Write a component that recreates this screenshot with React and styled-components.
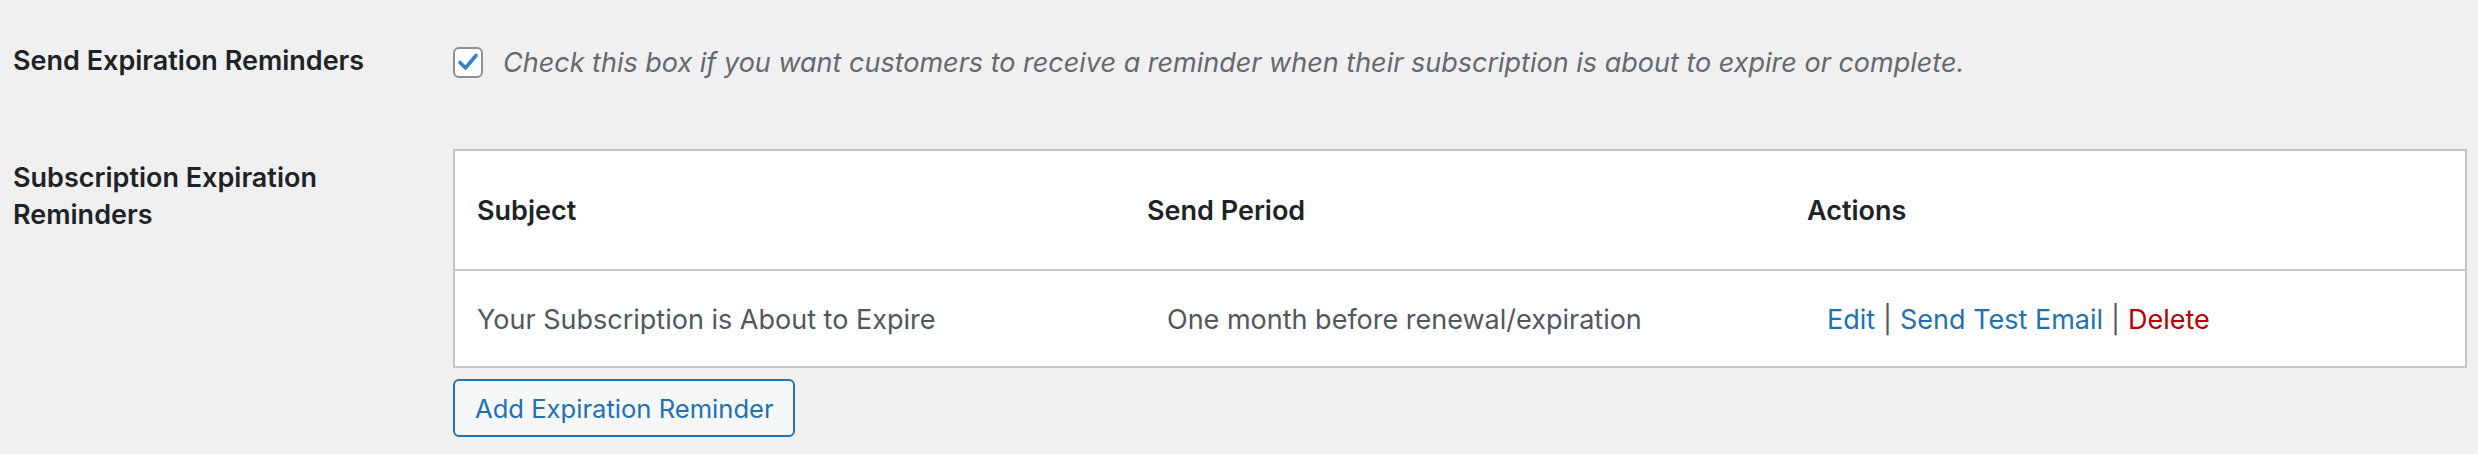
import React from 'react';
import styled, { createGlobalStyle } from 'styled-components';

const GlobalStyle = createGlobalStyle`
  html, body {
    margin: 0;
    padding: 0;
    background: #f0f0f1;
  }
  body {
    font-family: Inter, "Liberation Sans", Arial, sans-serif;
    color: #1d2327;
  }
`;

const Page = styled.div`
  padding: 42px 11px 20px 13px;
`;

const SettingRow = styled.div`
  display: grid;
  grid-template-columns: 440px 1fr;
  margin-top: ${(p) => p.$gap || 0}px;
`;

const RowLabel = styled.div`
  font-size: 27px;
  font-weight: 600;
  line-height: 37px;
  color: #1d2327;
  padding-top: ${(p) => p.$top || 0}px;
  max-width: 400px;
`;

const CheckLine = styled.label`
  display: flex;
  align-items: center;
  gap: 20px;
  height: 37px;
`;

const CheckBox = styled.span`
  display: inline-flex;
  flex: none;
  align-items: center;
  justify-content: center;
  box-sizing: border-box;
  width: 30px;
  height: 31px;
  margin-top: 3px;
  background: #fff;
  border: 2px solid #8c8f94;
  border-radius: 6px;
`;

const Description = styled.span`
  font-size: 27px;
  font-style: italic;
  color: #646970;
  padding-top: 4px;
  white-space: nowrap;
`;

const Table = styled.table`
  width: 100%;
  table-layout: fixed;
  border-collapse: collapse;
  background: #fff;
  border: 2px solid #c3c4c7;
`;

const HeadCell = styled.th`
  text-align: left;
  font-size: 27px;
  font-weight: 600;
  line-height: 38px;
  color: #1d2327;
  padding: 41px 22px 39px;
  border-bottom: 2px solid #c3c4c7;
`;

const Cell = styled.td`
  font-size: 27px;
  line-height: 40px;
  color: #50575e;
  padding: 29px 22px 26px ${(p) => (p.$indent ? 42 : 22)}px;
  white-space: nowrap;
`;

const Link = styled.a`
  color: ${(p) => (p.$danger ? '#b10000' : '#2271b1')};
  text-decoration: none;
`;

const Sep = styled.span`
  color: #50575e;
  margin: 0 8px;
`;

const AddButton = styled.button`
  margin-top: 11px;
  height: 58px;
  padding: 0 19px 0 20px;
  font-family: inherit;
  font-size: 25.6px;
  color: #2271b1;
  background: #f6f7f7;
  border: 2px solid #2271b1;
  border-radius: 6px;
  cursor: pointer;
`;

const CheckIcon = () => (
  <svg width="22" height="20" viewBox="0 0 22 20">
    <path d="M3 10.5 L8.5 16 L19 3.5" fill="none" stroke="#3582c4" strokeWidth="3.6" strokeLinecap="round" strokeLinejoin="round" />
  </svg>
);

const reminders = [
  {
    subject: 'Your Subscription is About to Expire',
    period: 'One month before renewal/expiration',
  },
];

const App = () => {
  return (
    <>
      <GlobalStyle />
      <Page>
        <SettingRow>
          <RowLabel>Send Expiration Reminders</RowLabel>
          <CheckLine>
            <CheckBox>
              <CheckIcon />
            </CheckBox>
            <Description>
              Check this box if you want customers to receive a reminder when their subscription is about to expire or complete.
            </Description>
          </CheckLine>
        </SettingRow>
        <SettingRow $gap={70}>
          <RowLabel $top={10}>Subscription Expiration Reminders</RowLabel>
          <div>
            <Table>
              <colgroup>
                <col style={{ width: '33.35%' }} />
                <col style={{ width: '32.8%' }} />
                <col />
              </colgroup>
              <thead>
                <tr>
                  <HeadCell>Subject</HeadCell>
                  <HeadCell>Send Period</HeadCell>
                  <HeadCell>Actions</HeadCell>
                </tr>
              </thead>
              <tbody>
                {reminders.map((r) => (
                  <tr key={r.subject}>
                    <Cell>{r.subject}</Cell>
                    <Cell $indent>{r.period}</Cell>
                    <Cell $indent>
                      <Link href="#">Edit</Link>
                      <Sep>|</Sep>
                      <Link href="#">Send Test Email</Link>
                      <Sep>|</Sep>
                      <Link href="#" $danger>Delete</Link>
                    </Cell>
                  </tr>
                ))}
              </tbody>
            </Table>
            <AddButton>Add Expiration Reminder</AddButton>
          </div>
        </SettingRow>
      </Page>
    </>
  );
};

export default App;
